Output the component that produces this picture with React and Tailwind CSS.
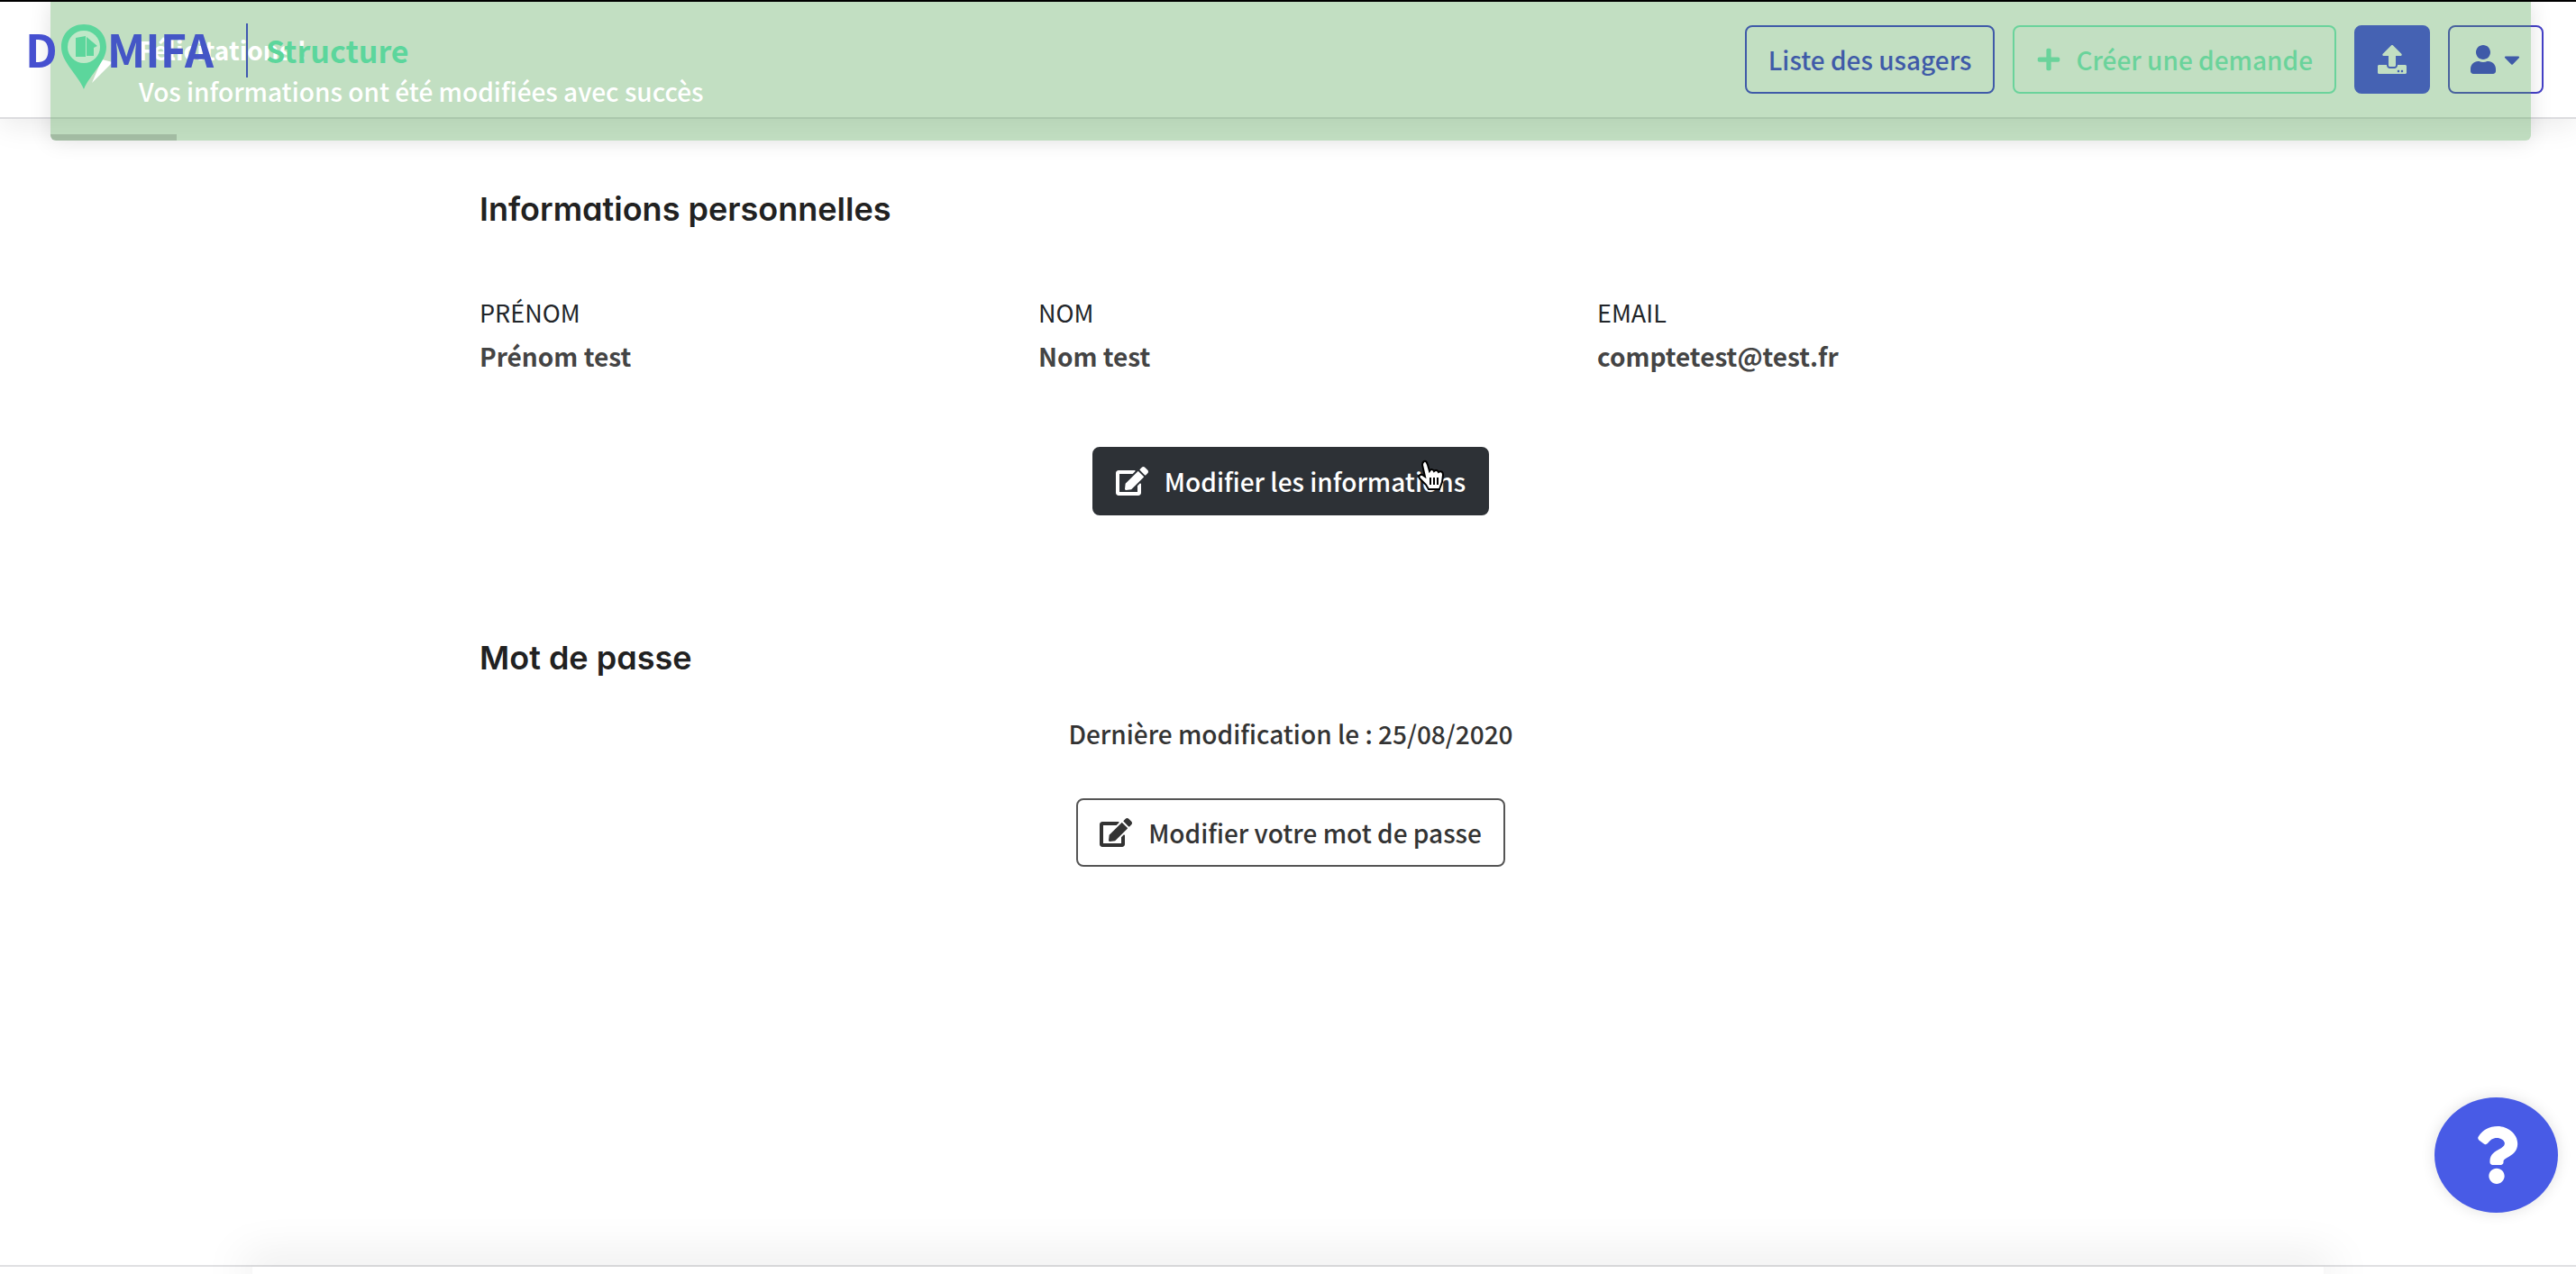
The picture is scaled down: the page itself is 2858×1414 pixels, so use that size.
import React from "react";
import { FaEdit, FaPlus, FaUpload, FaUser, FaCaretDown, FaQuestion } from "react-icons/fa";

const btn = "flex h-[76px] items-center justify-center rounded-lg border-2 font-medium whitespace-nowrap";

function Logo() {
  return (
    <a href="#" aria-label="DOMIFA" className="flex items-start text-[50px] leading-[54px] font-bold">
      <span className="text-[#4650d0]">D</span>
      <svg viewBox="0 0 52 74" className="ml-[3px] h-[74px] w-[52px] overflow-visible" aria-hidden="true">
        <path d="M35 66L58 43L46 40Z" fill="#fff" />
        <path d="M26 1C11 1 1 12 1 26C1 43 19 56 26 73C33 56 51 43 51 26C51 12 41 1 26 1Z" fill="#5cd69c" />
        <circle cx="26" cy="26" r="18" fill="#bfe8c8" />
        <path d="M17 16L28 14V37H17Z M29 15L41 25L37 27V36H29Z" fill="#5cd69c" />
      </svg>
      <span className="text-[#4456c6]">MIFA</span>
    </a>
  );
}

function Header() {
  return (
    <header className="flex h-[130px] items-center justify-between border-b-2 border-[#dcdcdf] bg-white pr-9 pl-7 shadow-[0_8px_30px_rgba(0,0,0,0.08)]">
      <div className="relative z-10 mt-6 flex items-start self-start">
        <Logo />
        <span className="ml-9 h-[60px] w-[2px] bg-[#4058b0]" />
        <a href="#" className="ml-5 text-[34px] leading-[60px] font-bold text-[#5cd69c]">Structure</a>
      </div>
      <nav className="flex items-center gap-5 text-[28px] leading-[40px]">
        <button className={`${btn} border-[#3634d8] px-6 text-[#3634d8]`}>Liste des usagers</button>
        <button className={`${btn} gap-4 border-[#79edc4] px-6 text-[#79edc4]`}>
          <FaPlus className="h-7 w-7" />
          Créer une demande
        </button>
        <button aria-label="Importer" className={`${btn} w-[84px] border-[#3f3fe8] bg-[#3f3fe8] text-white`}>
          <FaUpload className="h-8 w-8" />
        </button>
        <button aria-label="Mon compte" className={`${btn} w-[106px] gap-2 border-[#4540c8] text-[#3634d8]`}>
          <FaUser className="h-8 w-7" />
          <FaCaretDown className="h-7 w-5" />
        </button>
      </nav>
    </header>
  );
}

function Toast() {
  return (
    <div role="alert" className="absolute inset-x-14 top-0 mr-[-6px] h-[154px] rounded-b-md bg-[#51a351]/35 pt-[30px] pl-[98px] text-[28px] leading-[46px] text-white shadow-[0_0_24px_rgba(0,0,0,0.12)]">
      <div className="font-bold">Félicitations !</div>
      <div className="font-medium">Vos informations ont été modifiées avec succès</div>
      <div className="absolute bottom-0 left-0 h-[7px] w-[140px] rounded-bl-md bg-black/15" />
    </div>
  );
}

function Field({ label, value }) {
  return (
    <div className="px-[30px]">
      <dt className="text-[27px] text-[#212529] uppercase">{label}</dt>
      <dd className="font-bold text-[#444]">{value}</dd>
    </div>
  );
}

const heading = "px-[30px] font-['Inter'] text-[36px] leading-[48px] font-semibold text-[#212121] [font-feature-settings:'cv11']";

export default function App() {
  return (
    <div className="relative flex min-h-screen flex-col overflow-hidden border-t-2 border-black bg-white font-['Noto_Sans_CJK_JP','Noto_Sans',sans-serif] text-[28px] leading-[48px] text-[#333]">
      <Header />
      <Toast />
      <main className="grow pl-[6px]">
        <div className="mx-auto max-w-[1860px]">
          <section className="flex flex-col pt-[76px]">
            <h2 className={heading}>Informations personnelles</h2>
            <dl className="mt-[67px] grid grid-cols-3">
              <Field label="Prénom" value="Prénom test" />
              <Field label="Nom" value="Nom test" />
              <Field label="Email" value="comptetest@test.fr" />
            </dl>
            <button className={`${btn} relative mt-[77px] gap-[18px] self-center border-[#2d3136] bg-[#2d3136] px-6 text-white`}>
              <FaEdit className="h-9 w-9" />
              Modifier les informations
              <svg viewBox="0 0 32 36" className="absolute top-3 right-[46px] h-[36px] w-[32px]" aria-hidden="true">
                <path d="M8 2C10 1 11 3 12 6L14 13C16 10 18 11 19 13C21 11 23 12 24 14C27 12 29 14 29 17L28 25L25 33H13L10 28L3 21C1 18 4 16 6 17L9 19L6 6C6 4 6 3 8 2Z" fill="#fff" stroke="#000" strokeWidth="2" />
                <path d="M15 20V28M19 20V28M23 20V28" stroke="#000" strokeWidth="2" />
              </svg>
            </button>
          </section>
          <section className="mt-[134px] flex flex-col">
            <h2 className={heading}>Mot de passe</h2>
            <p className="mt-[36px] text-center font-medium">Dernière modification le : 25/08/2020</p>
            <button className={`${btn} mt-[48px] gap-[18px] self-center border-[#555] px-6`}>
              <FaEdit className="h-9 w-9" />
              Modifier votre mot de passe
            </button>
          </section>
        </div>
      </main>
      <button aria-label="Aide" className="absolute right-5 bottom-[68px] flex h-[128px] w-[137px] items-center justify-center rounded-[50%] bg-[#485be6] text-white shadow-[0_0_16px_rgba(0,0,0,0.12)]">
        <FaQuestion className="h-16 w-12" />
      </button>
      <footer className="h-[10px] border-t-2 border-[#e0e0e2]">
        <div className="mx-[280px] h-2 shadow-[0_0_50px_10px_rgba(0,0,0,0.1)]" />
      </footer>
    </div>
  );
}
